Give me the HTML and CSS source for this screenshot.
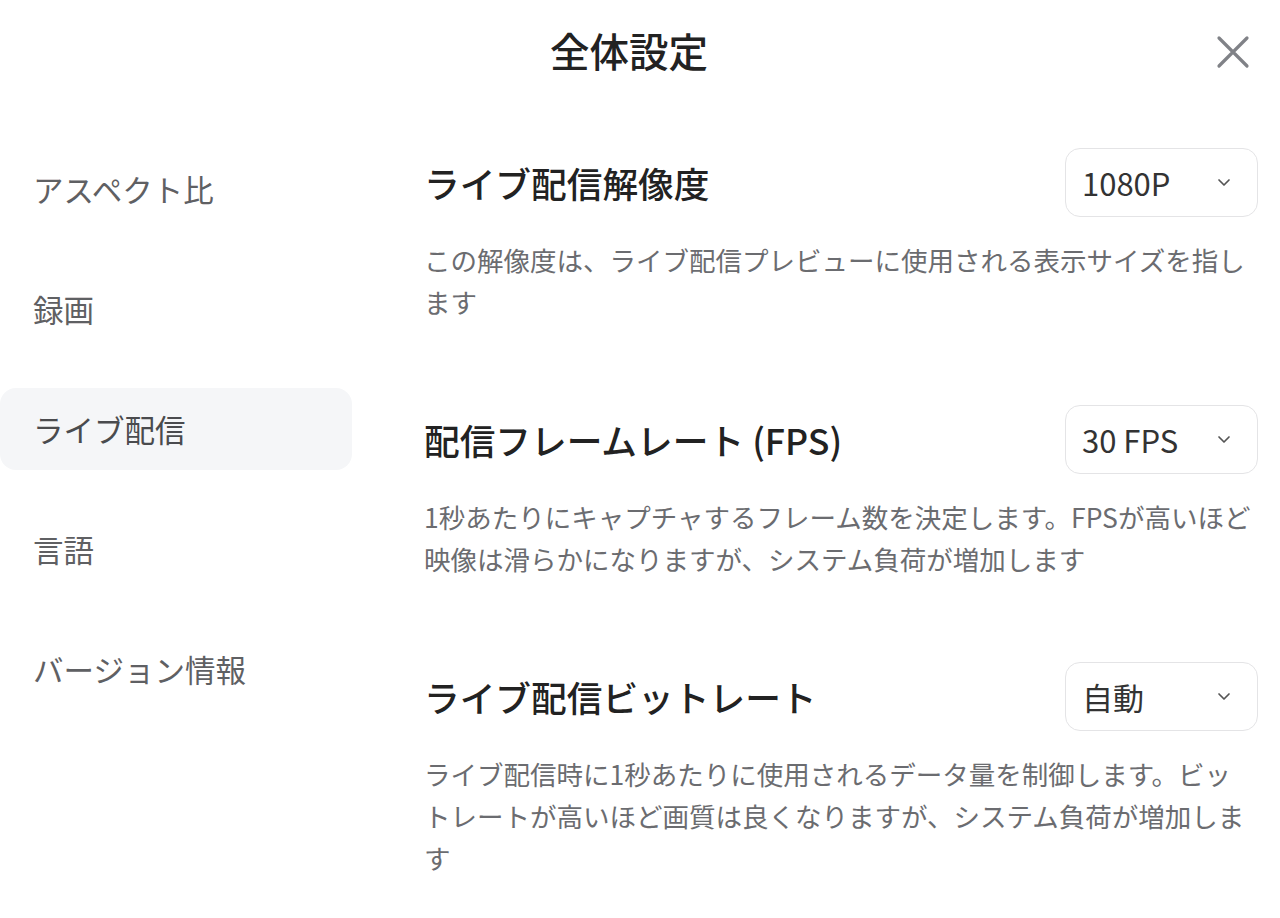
FILE: index.html
```html
<!DOCTYPE html>
<html lang="ja">
<head>
    <meta charset="UTF-8">
    <meta name="viewport" content="width=device-width, initial-scale=1.0">
    <title>全体設定</title>
    <link rel="stylesheet" href="styles.css">
</head>
<body>
    <div class="settings-dialog">
        <header class="dialog-header">
            <h1>全体設定</h1>
            <button class="close-button" aria-label="閉じる">
                <svg width="34" height="34" viewBox="0 0 34 34">
                    <path d="M3 3 L31 31 M31 3 L3 31" stroke="#808287" stroke-width="3.2" stroke-linecap="round" fill="none"/>
                </svg>
            </button>
        </header>

        <div class="dialog-body">
            <nav class="side-menu">
                <a class="menu-item">アスペクト比</a>
                <a class="menu-item">録画</a>
                <a class="menu-item active">ライブ配信</a>
                <a class="menu-item">言語</a>
                <a class="menu-item">バージョン情報</a>
            </nav>

            <main class="setting-list">
                <section class="setting">
                    <div class="setting-row">
                        <h2>ライブ配信解像度</h2>
                        <div class="select-box">
                            <span>1080P</span>
                            <svg class="chevron" width="14" height="9" viewBox="0 0 14 9"><path d="M2 2 L7 7 L12 2" stroke="#555" stroke-width="1.7" fill="none" stroke-linecap="round" stroke-linejoin="round"/></svg>
                        </div>
                    </div>
                    <p>この解像度は、ライブ配信プレビューに使用される表示サイズを指します</p>
                </section>

                <section class="setting">
                    <div class="setting-row">
                        <h2>配信フレームレート (FPS)</h2>
                        <div class="select-box">
                            <span>30 FPS</span>
                            <svg class="chevron" width="14" height="9" viewBox="0 0 14 9"><path d="M2 2 L7 7 L12 2" stroke="#555" stroke-width="1.7" fill="none" stroke-linecap="round" stroke-linejoin="round"/></svg>
                        </div>
                    </div>
                    <p>1秒あたりにキャプチャするフレーム数を決定します。FPSが高いほど映像は滑らかになりますが、システム負荷が増加します</p>
                </section>

                <section class="setting">
                    <div class="setting-row">
                        <h2>ライブ配信ビットレート</h2>
                        <div class="select-box">
                            <span>自動</span>
                            <svg class="chevron" width="14" height="9" viewBox="0 0 14 9"><path d="M2 2 L7 7 L12 2" stroke="#555" stroke-width="1.7" fill="none" stroke-linecap="round" stroke-linejoin="round"/></svg>
                        </div>
                    </div>
                    <p>ライブ配信時に1秒あたりに使用されるデータ量を制御します。ビットレートが高いほど画質は良くなりますが、システム負荷が増加します</p>
                </section>
            </main>
        </div>
    </div>
</body>
</html>
```

FILE: styles.css
```css
* {
    margin: 0;
    padding: 0;
    box-sizing: border-box;
}

body {
    font-family: "Noto Sans CJK JP", "Noto Sans", sans-serif;
    background: white;
    color: #222;
    width: 1280px;
    height: 918px;
    overflow: hidden;
}

.settings-dialog {
    width: 1280px;
}

.dialog-header {
    position: relative;
    height: 104px;
    display: flex;
    align-items: center;
    justify-content: center;
}

.dialog-header h1 {
    font-size: 39.5px;
    font-weight: 500;
    color: #222;
    margin-top: -6px;
    margin-right: 22px;
}

.close-button {
    position: absolute;
    right: 30px;
    top: 35px;
    background: none;
    border: none;
    width: 34px;
    height: 34px;
    cursor: pointer;
}

.dialog-body {
    display: flex;
    padding-top: 44px;
}

.side-menu {
    width: 352px;
    display: flex;
    flex-direction: column;
    gap: 38px;
}

.menu-item {
    height: 82px;
    display: flex;
    align-items: center;
    padding-left: 33px;
    font-size: 30.5px;
    color: #5f6063;
    border-radius: 16px;
}

.menu-item.active {
    background: #f5f6f8;
    color: #4a4b4e;
}

.setting-list {
    margin-left: 72px;
    width: 834px;
}

.setting {
    margin-bottom: 82px;
}

.setting-row {
    display: flex;
    align-items: center;
    justify-content: space-between;
    height: 68px;
}

.setting-row h2 {
    font-size: 35.7px;
    font-weight: 500;
    color: #222;
}

.select-box {
    width: 193px;
    height: 69px;
    border: 1.5px solid #e4e4e6;
    border-radius: 15px;
    display: flex;
    align-items: center;
    justify-content: space-between;
    padding: 0 26px 0 16px;
    font-size: 31px;
    color: #333;
}

.setting p {
    max-width: 830px;
    margin-top: 23px;
    font-size: 26.5px;
    line-height: 42px;
    color: #6b6c70;
}
```
